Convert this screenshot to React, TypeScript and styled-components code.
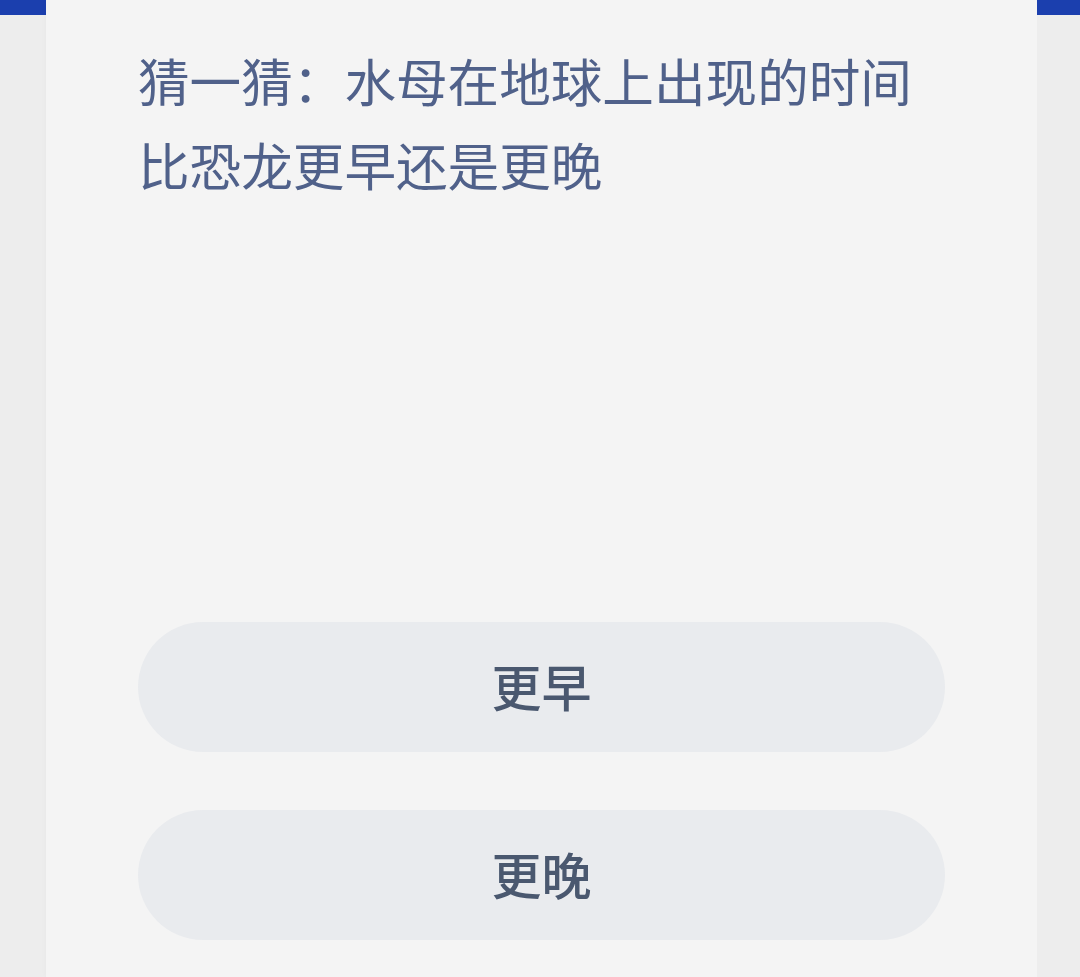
import styled, { createGlobalStyle } from "styled-components";

const GlobalStyle = createGlobalStyle`
  html, body {
    margin: 0;
    padding: 0;
    background: #ededed;
  }
  #root {
    height: 977px;
  }
`;

const options = ["更早", "更晚"];

export default function App() {
  return (
    <>
      <GlobalStyle />
      <Page>
        <Side $width={46}>
          <BlueTab />
        </Side>
        <Card>
          <Question>猜一猜：水母在地球上出现的时间比恐龙更早还是更晚</Question>
          <Spacer />
          <Answers>
            {options.map((o) => (
              <AnswerButton key={o}>{o}</AnswerButton>
            ))}
          </Answers>
        </Card>
        <Side $width={43}>
          <BlueTab />
        </Side>
      </Page>
    </>
  );
}

const Page = styled.div`
  display: flex;
  width: 1080px;
  height: 977px;
  background: #ededed;
  font-family: "Noto Sans CJK SC", "Noto Sans", sans-serif;
`;

const Side = styled.div<{ $width: number }>`
  width: ${(p) => p.$width}px;
  flex-shrink: 0;
  background: #ededed;
`;

const BlueTab = styled.div`
  height: 15px;
  background: #1b3fae;
`;

const Card = styled.div`
  flex: 1;
  display: flex;
  flex-direction: column;
  background: #f4f4f4;
  padding: 38px 92px 37px 92px;
  box-shadow: 0 0 6px rgba(0, 0, 0, 0.03);
`;

const Question = styled.div`
  font-size: 51.6px;
  line-height: 84px;
  color: #50618a;
  font-weight: 400;
`;

const Spacer = styled.div`
  flex: 1;
`;

const Answers = styled.div`
  display: flex;
  flex-direction: column;
  gap: 58px;
`;

const AnswerButton = styled.button`
  height: 130px;
  border: none;
  border-radius: 65px;
  background: #e9ebee;
  color: #4a586f;
  font-family: inherit;
  font-size: 50px;
  font-weight: 500;
  padding: 0 0 5px 0;
  cursor: pointer;
`;
